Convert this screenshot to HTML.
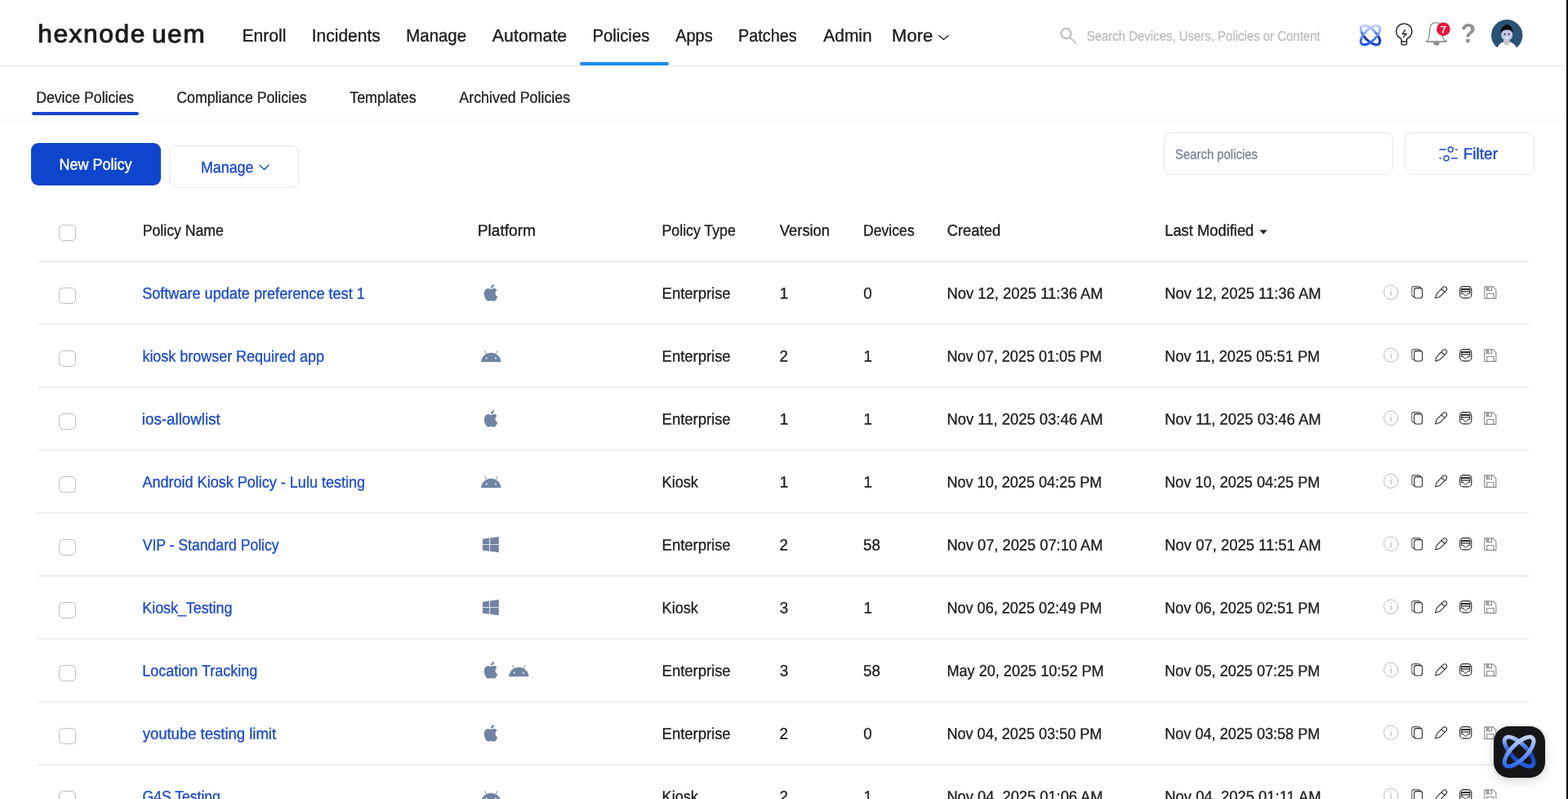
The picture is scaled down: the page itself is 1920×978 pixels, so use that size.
<!DOCTYPE html>
<html lang="en">
<head>
<meta charset="utf-8">
<title>Hexnode UEM - Device Policies</title>
<style>
*{box-sizing:border-box;margin:0;padding:0}
html,body{width:1920px;height:978px;overflow:hidden;background:#fff}
body{font-family:"Liberation Sans",sans-serif;color:#222}
#app{position:relative;width:1920px;height:978px;overflow:hidden;background:#fff;will-change:transform}
header,nav,main,section,.search,.tools,.tbl{display:contents}
a{text-decoration:none}
i,b{font-style:normal}
i,svg,button,.row,.chat,.btn-o{position:absolute;display:block}
button{appearance:none;border:0;background:none;font:inherit;overflow:visible;text-align:left}
.defs{left:0;top:0}
.t{position:absolute;left:0;top:0;white-space:pre;line-height:1;font-weight:400;transform-origin:0 0;text-rendering:geometricPrecision;font-family:"Liberation Sans",sans-serif}
.ic{overflow:visible}
.row{left:0;width:1918px;height:77px}
.hl{left:46px;top:76px;width:1826px;height:2px;background:#ededed}
.cb{left:72px;width:21px;height:20px;border:1px solid #bdbdbd;border-radius:5.5px;background:#fff}
.hdr-line{left:0;top:80px;width:1918px;height:1px;background:#e6e6e6}
.nav-ul{left:710px;top:76px;width:109.4px;height:4px;border-radius:2px;background:#1a8cf2}
.tab-ul{left:39.3px;top:137px;width:130.6px;height:4px;border-radius:2px;background:#1246cb}
.tab-band{left:0;top:144px;width:1918px;height:6px;background:linear-gradient(#fcfcfc,#fcfcfc 55%,#fafafa 65%,#fafafa 88%,#fff)}
.btn-new{left:38px;top:175px;width:159px;height:52px;border-radius:9px;background:#0f45cd}
.btn-o{border:1px solid #e8e8e8;border-radius:9px;background:#fff}
.btn-manage{left:207px;top:178px;width:159px;height:52px}
.inp-search{left:1425px;top:162px;width:281px;height:52px}
.btn-filter{left:1720px;top:162px;width:159px;height:52px}
.edge{left:1918px;top:0;width:2px;height:978px;background:#000}
.chat{left:1829px;top:889px;width:63px;height:63px;border-radius:19px;background:#161618;box-shadow:0 4px 14px rgba(0,0,0,.15),0 0 4px rgba(0,0,0,.08)}
</style>
</head>
<body>
<div id="app">
<svg class="defs" width="0" height="0" aria-hidden="true">
<defs>
<linearGradient id="g-a1" gradientUnits="userSpaceOnUse" x1="0" y1="-13" x2="0" y2="13" gradientTransform="rotate(45)"><stop offset="0" stop-color="#cdd9fc"/><stop offset=".38" stop-color="#8aa9f5"/><stop offset=".62" stop-color="#4a7eef"/><stop offset="1" stop-color="#1756ec"/></linearGradient>
<linearGradient id="g-a2" gradientUnits="userSpaceOnUse" x1="0" y1="-13" x2="0" y2="13" gradientTransform="rotate(-45)"><stop offset="0" stop-color="#c9d6fb"/><stop offset=".3" stop-color="#8eabf3"/><stop offset=".46" stop-color="#2f55c4"/><stop offset=".56" stop-color="#0d2f9c"/><stop offset=".75" stop-color="#0f3bb8"/><stop offset="1" stop-color="#1a55e2"/></linearGradient>
<linearGradient id="g-b1" gradientUnits="userSpaceOnUse" x1="0" y1="-13" x2="0" y2="13" gradientTransform="rotate(45)"><stop offset="0" stop-color="#c9d8ff"/><stop offset=".45" stop-color="#7ea4fb"/><stop offset="1" stop-color="#2463f4"/></linearGradient>
<linearGradient id="g-b2" gradientUnits="userSpaceOnUse" x1="0" y1="-13" x2="0" y2="13" gradientTransform="rotate(-45)"><stop offset="0" stop-color="#bfd0ff"/><stop offset=".35" stop-color="#4a78e8"/><stop offset=".55" stop-color="#153fae"/><stop offset="1" stop-color="#2562f2"/></linearGradient>
<symbol id="i-apple" viewBox="0 0 24 24" preserveAspectRatio="none"><path fill="#7083a3" d="M12.152 6.896c-.948 0-2.415-1.078-3.96-1.04-2.04.027-3.91 1.183-4.961 3.014-2.117 3.675-.546 9.103 1.519 12.09 1.013 1.454 2.208 3.09 3.792 3.039 1.52-.065 2.09-.987 3.935-.987 1.831 0 2.35.987 3.96.948 1.637-.026 2.676-1.48 3.676-2.948 1.156-1.688 1.636-3.325 1.662-3.415-.039-.013-3.182-1.221-3.22-4.857-.026-3.04 2.48-4.494 2.597-4.559-1.429-2.09-3.623-2.324-4.39-2.376-2-.156-3.675 1.09-4.61 1.09zM15.53 3.83c.843-1.012 1.4-2.427 1.245-3.83-1.207.052-2.662.805-3.532 1.818-.78.896-1.454 2.338-1.273 3.714 1.338.104 2.715-.688 3.559-1.701"/></symbol>
<symbol id="i-android" viewBox="0 5.2 24 13.6" preserveAspectRatio="none"><path fill="#7083a3" d="M17.523 15.3414c-.5511 0-.9993-.4486-.9993-.9997s.4483-.9993.9993-.9993c.5511 0 .9993.4483.9993.9993.0001.5511-.4482.9997-.9993.9997m-11.046 0c-.5511 0-.9993-.4486-.9993-.9997s.4482-.9993.9993-.9993c.5511 0 .9993.4483.9993.9993 0 .5511-.4483.9997-.9993.9997m11.4045-6.02l1.9973-3.4592a.416.416 0 00-.1521-.5676.416.416 0 00-.5676.1521l-2.0223 3.503C15.5902 8.2439 13.8533 7.8508 12 7.8508s-3.5902.3931-5.1367 1.0989L4.841 5.4467a.4161.4161 0 00-.5677-.1521.4157.4157 0 00-.1521.5676l1.9973 3.4592C2.6889 11.1867.3432 14.6589 0 18.761h24c-.3435-4.1021-2.6892-7.5743-6.1185-9.4396"/></symbol>
<symbol id="i-win" viewBox="0 32 448 448" preserveAspectRatio="none"><path fill="#7083a3" d="M0 93.7l183.6-25.3v177.4H0V93.7zm0 324.6l183.6 25.3V268.4H0v149.9zm203.8 28L448 480V268.4H203.8v177.9zm0-380.6v180.1H448V32L203.8 65.7z"/></symbol>
<symbol id="i-actions" viewBox="0 0 144 24">
<g fill="none" stroke-linecap="round" stroke-linejoin="round">
<circle cx="11.25" cy="11.7" r="8.7" stroke="#bdbdbd" stroke-width="1"/>
<path d="M11.25 10.4v5.2" stroke="#b0b0b0" stroke-width="1.05"/>
<circle cx="11.25" cy="7.7" r=".7" fill="#b0b0b0" stroke="none"/>
<g stroke="#2a2a2a" stroke-width="1.05">
<path d="M39.7 17.6C37.8 17.3 36.8 16.4 36.8 14.6V7C36.8 5.4 37.7 4.6 39.3 4.6H44.6C46.2 4.6 47.2 5.2 47.8 6.6" stroke="#555"/>
<rect x="39.7" y="6.6" width="9.9" height="12.3" rx="2.3"/>
<g transform="translate(65.6 19) rotate(45)"><path d="M0 0C-1.1-1.7-2.75-4-2.75-5.6V-16A2.75 2.75 0 0 1 2.75-16V-5.6C2.75-4 1.1-1.7 0 0ZM-2.75-13.6Q0-12.5 2.75-13.6"/></g>
<rect x="95.7" y="4.6" width="14.1" height="14.3" rx="4.2" stroke-width="1.15"/>
<path d="M97.8 8H107.6" stroke-width="1.8"/><path d="M97.8 10.9H107.6" stroke-width="1.4"/>
<path d="M97.7 7.7V13.6h2.5c.5 1.6 1.4 2.5 2.45 2.5s1.95-.9 2.45-2.5h2.6V7.7" stroke-width="1"/>
</g>
<g stroke="#8c8c8c" stroke-width="1.15">
<path d="M125.75 4.85h10.4l3.7 3.7v10.8h-14.1z"/>
<path d="M128.3 5v4.7h6.2V5M128.7 19.2v-5.7h8.4v5.7"/>
<path d="M128.9 5.3h2.6v4h-2.6z" fill="#9c9c9c" stroke="none"/>
</g>
</g>
</symbol>
<symbol id="i-atom" viewBox="-14 -14 28 28"><g fill="none" stroke-width="3"><ellipse rx="15" ry="7" transform="rotate(45)" stroke="url(#g-a2)"/><ellipse rx="15" ry="7" transform="rotate(-45)" stroke="url(#g-a1)"/></g></symbol>
<symbol id="i-atom2" viewBox="-14 -14 28 28"><g fill="none" stroke-width="3.3"><ellipse rx="15.6" ry="6.3" transform="rotate(45)" stroke="url(#g-b2)"/><ellipse rx="15.6" ry="6.3" transform="rotate(-45)" stroke="url(#g-b1)"/></g></symbol>
</defs>
</svg>
<header>
<a class="t logo" style="transform:matrix(1.04,.0005,0,1,46.2,26.81);font-size:30.5px;color:#1c1c1c;letter-spacing:1.503px;word-spacing:-3.2px;-webkit-text-stroke:0.95px;">hexnode uem</a>
<nav>
<a class="t" style="transform:matrix(0.9789,.0005,0,1,296.43,32.75);font-size:21.6px;color:#1a1a1a;-webkit-text-stroke:0.33px;">Enroll</a>
<a class="t" style="transform:matrix(0.973,.0005,0,1,381.72,32.75);font-size:21.6px;color:#1a1a1a;-webkit-text-stroke:0.33px;">Incidents</a>
<a class="t" style="transform:matrix(0.9452,.0005,0,1,497.28,32.75);font-size:21.6px;color:#1a1a1a;-webkit-text-stroke:0.33px;">Manage</a>
<a class="t" style="transform:matrix(0.9886,.0005,0,1,602.86,32.75);font-size:21.6px;color:#1a1a1a;-webkit-text-stroke:0.33px;">Automate</a>
<a class="t on" style="transform:matrix(0.9399,.0005,0,1,725.38,32.75);font-size:21.6px;color:#1a1a1a;-webkit-text-stroke:0.33px;">Policies</a>
<a class="t" style="transform:matrix(0.9257,.0005,0,1,827.17,32.75);font-size:21.6px;color:#1a1a1a;-webkit-text-stroke:0.33px;">Apps</a>
<a class="t" style="transform:matrix(0.9173,.0005,0,1,904.12,32.75);font-size:21.6px;color:#1a1a1a;-webkit-text-stroke:0.33px;">Patches</a>
<a class="t" style="transform:matrix(0.9687,.0005,0,1,1008.36,32.75);font-size:21.6px;color:#1a1a1a;-webkit-text-stroke:0.33px;">Admin</a>
<a class="t" style="transform:matrix(1.0253,.0005,0,1,1091.96,32.75);font-size:21.6px;color:#1a1a1a;-webkit-text-stroke:0.33px;">More</a>
<svg class="ic" style="left:1149.3px;top:42px" width="14" height="8" viewBox="0 0 14 8"><path d="M.7 1.4l5.8 4.9 5.8-4.9" fill="none" stroke="#1e1e1e" stroke-width="1.3" stroke-linecap="round" stroke-linejoin="round"/></svg>
<i class="nav-ul"></i>
</nav>
<label class="search"><svg class="ic" style="left:1297px;top:33px" width="24" height="24" viewBox="0 0 24 24"><g fill="none" stroke="#bfbfbf" stroke-linecap="round"><circle cx="8.4" cy="8" r="6.05" stroke-width="2.3"/><path d="M13 12.6l7.3 7" stroke-width="1.8"/></g></svg><span class="t" style="transform:matrix(0.8911,.0005,0,1,1330.7,36.64);font-size:16.8px;color:#bcbcbc;-webkit-text-stroke:0.28px;">Search Devices, Users, Policies or Content</span></label>
<div class="tools">
<svg class="ic" style="left:1663.85px;top:28.8px" width="28" height="28" viewBox="-14 -14 28 28"><use href="#i-atom" x="-14" y="-14" width="28" height="28"/></svg>
<svg class="ic" style="left:1706px;top:26px" width="28" height="32" viewBox="0 0 28 32"><g fill="none" stroke="#111" stroke-width="1.35" stroke-linecap="round" stroke-linejoin="round"><path d="M10.1 27.2V22.8C10.1 21.4 8.4 20.6 6.35 19.16A9.65 9.65 0 1 1 20.25 19.16C18.2 20.6 16.5 21.4 16.5 22.8V27.2C16.5 28.3 15.9 28.8 14.9 28.8H11.7C10.7 28.8 10.1 28.3 10.1 27.2ZM10.3 24.8H16.3"/><path d="M14.4 10.9l-3.1 4.7 5-.3-3.9 4.4" stroke-width="1.25"/></g></svg>
<svg class="ic" style="left:1744px;top:25px" width="32" height="33" viewBox="0 0 32 33"><g fill="none" stroke="#8c8c8c" stroke-linecap="round" stroke-linejoin="round"><path d="M3.2 25.2C4.9 24 5.7 22.7 5.9 20.5L6.7 11C7.1 5.7 10 2.6 14.3 2.6C18.6 2.6 21.5 5.7 21.9 11L22.7 20.5C22.9 22.7 23.7 24 27 25.2" stroke-width="1.3"/><path d="M3 25.9H26.7" stroke-width="1.9"/></g><path d="M11.1 26.8h7.6a3.8 4 0 0 1-7.6 0z" fill="#8c8c8c"/><circle cx="23.4" cy="10.7" r="8.3" fill="#e5143a"/></svg>
<b class="t badge" style="transform:matrix(1.069,.0005,0,1,1763.74,30.55);font-size:12.2px;color:#ffffff;-webkit-text-stroke:0.35px;">7</b>
<a class="t help" style="transform:matrix(0.9185,.0005,0,1,1788.87,23.9);font-size:33px;color:#8e8e8e;font-weight:700;">?</a>
<svg class="ic" style="left:1825.9px;top:23.7px" width="38.4" height="40" viewBox="0 0 38.4 40"><circle cx="19.2" cy="19.2" r="19.2" fill="#2a5277"/><path d="M4 38C5 36 6.4 35 7.7 34C9.3 30.6 11.8 28.3 15 27.3H23C26.2 28.3 29.1 30.6 30.7 34C32 35 33.4 36 34.4 38V40H4Z" fill="#fff"/><path d="M15.1 25h7.7v3.3c-.8 2.3-2.2 3.5-3.85 3.5s-3.05-1.2-3.85-3.5z" fill="#c4c9c5"/><ellipse cx="19.2" cy="18.7" rx="7" ry="7.3" fill="#c5c9e6"/><path d="M12.1 16.5c-.7-4.6.900-8 4.5-9.3 1.2-1.9 3.9-2 4.9-.3 3.4 1 5.4 4.6 4.7 9.4-1.1-2.6-3.2-3.7-7-3.7s-6 1.2-7.1 3.9z" fill="#08080a"/><circle cx="16.5" cy="17.7" r="1" fill="#111"/><circle cx="21.6" cy="17.7" r="1" fill="#111"/><path d="M16.6 21.3c1.5 1 3.3 1 4.8 0-.3 2.4-4.5 2.4-4.8 0z" fill="#fff"/></svg>
</div>
<i class="hdr-line"></i>
</header>
<nav class="tabs">
<a class="t" style="transform:matrix(0.9098,.0005,0,1,44.24,110.75);font-size:19.4px;color:#1c1c1c;-webkit-text-stroke:0.3px;">Device Policies</a>
<a class="t" style="transform:matrix(0.9128,.0005,0,1,216.31,110.75);font-size:19.4px;color:#1c1c1c;-webkit-text-stroke:0.3px;">Compliance Policies</a>
<a class="t" style="transform:matrix(0.9217,.0005,0,1,428.21,110.75);font-size:19.4px;color:#1c1c1c;-webkit-text-stroke:0.3px;">Templates</a>
<a class="t" style="transform:matrix(0.9195,.0005,0,1,562.37,110.75);font-size:19.4px;color:#1c1c1c;-webkit-text-stroke:0.3px;">Archived Policies</a>
<i class="tab-ul"></i><i class="tab-band"></i>
</nav>
<main>
<section class="toolbar">
<button class="btn-new" type="button"><span class="t" style="transform:matrix(0.9267,.0005,0,1,34.56,17.65);font-size:19.4px;color:#ffffff;-webkit-text-stroke:0.4px;">New Policy</span></button>
<button class="btn-o btn-manage" type="button"><span class="t" style="transform:matrix(0.92,.0005,0,1,37.97,17.25);font-size:19.4px;color:#1a49c6;-webkit-text-stroke:0.3px;">Manage</span><svg class="ic" style="left:109px;top:21.8px" width="13" height="8" viewBox="0 0 13 8"><path d="M1 1.2l5.5 5.3 5.5-5.3" fill="none" stroke="#1d4fcb" stroke-width="1.4" stroke-linecap="round" stroke-linejoin="round"/></svg></button>
<label class="btn-o inp-search"><span class="t" style="transform:matrix(0.8859,.0005,0,1,13.1,18.44);font-size:16.8px;color:#748292;-webkit-text-stroke:0.28px;">Search policies</span></label>
<button class="btn-o btn-filter" type="button"><svg class="ic" style="left:39.5px;top:14.5px" width="25" height="21" viewBox="0 0 25 21"><g fill="none" stroke="#1f4fca" stroke-width="1.5" stroke-linecap="round"><path d="M2 5H9.1M21.7 5H23.3M2 15.75H3.3M16.5 15.75H23.3"/><circle cx="15.25" cy="5" r="3.05" stroke-width="1.4"/><circle cx="10" cy="15.75" r="3.05" stroke-width="1.4"/></g></svg><span class="t" style="transform:matrix(0.9822,.0005,0,1,70.69,16.75);font-size:19.4px;color:#1a49c6;-webkit-text-stroke:0.4px;">Filter</span></button>
</section>
<div class="tbl" role="table">
<div class="row" role="row" style="top:243px">
<i class="cb" style="top:32px"></i>
<span class="t th" role="columnheader" style="transform:matrix(0.9107,.0005,0,1,174.75,30.55);font-size:19.4px;color:#1a1a1a;-webkit-text-stroke:0.33px;">Policy Name</span>
<span class="t th" role="columnheader" style="transform:matrix(0.9864,.0005,0,1,584.75,30.55);font-size:19.4px;color:#1a1a1a;-webkit-text-stroke:0.33px;">Platform</span>
<span class="t th" role="columnheader" style="transform:matrix(0.9128,.0005,0,1,810.55,30.55);font-size:19.4px;color:#1a1a1a;-webkit-text-stroke:0.33px;">Policy Type</span>
<span class="t th" role="columnheader" style="transform:matrix(0.9454,.0005,0,1,954.86,30.55);font-size:19.4px;color:#1a1a1a;-webkit-text-stroke:0.33px;">Version</span>
<span class="t th" role="columnheader" style="transform:matrix(0.9082,.0005,0,1,1057.05,30.55);font-size:19.4px;color:#1a1a1a;-webkit-text-stroke:0.33px;">Devices</span>
<span class="t th" role="columnheader" style="transform:matrix(0.9492,.0005,0,1,1159.69,30.55);font-size:19.4px;color:#1a1a1a;-webkit-text-stroke:0.33px;">Created</span>
<span class="t th" role="columnheader" style="transform:matrix(0.9461,.0005,0,1,1426.2,30.55);font-size:19.4px;color:#1a1a1a;-webkit-text-stroke:0.33px;">Last Modified</span>
<svg class="ic" style="left:1542px;top:38px" width="10" height="6" viewBox="0 0 10 6"><path d="M.3.4h9.4L5 5.7z" fill="#222"/></svg>
<i class="hl"></i>
</div>
<div class="row" role="row" style="top:320px">
<i class="cb" style="top:32px"></i>
<a class="t lnk" role="cell" style="transform:matrix(0.9332,.0005,0,1,174.14,30.55);font-size:19.4px;color:#1a49c6;-webkit-text-stroke:0.3px;">Software update preference test 1</a>
<svg class="ic" style="left:590.9px;top:27.9px" width="20.1" height="20.8"><use href="#i-apple"/></svg>
<span class="t" role="cell" style="transform:matrix(0.9507,.0005,0,1,810.58,30.55);font-size:19.4px;color:#1c1c1c;-webkit-text-stroke:0.3px;">Enterprise</span>
<span class="t" role="cell" style="transform:matrix(0.97,.0005,0,1,954.73,30.55);font-size:19.4px;color:#1c1c1c;-webkit-text-stroke:0.3px;">1</span>
<span class="t" role="cell" style="transform:matrix(0.97,.0005,0,1,1057.16,30.55);font-size:19.4px;color:#1c1c1c;-webkit-text-stroke:0.3px;">0</span>
<span class="t" role="cell" style="transform:matrix(0.9504,.0005,0,1,1159.38,30.55);font-size:19.4px;color:#1c1c1c;-webkit-text-stroke:0.3px;">Nov 12, 2025 11:36 AM</span>
<span class="t" role="cell" style="transform:matrix(0.9504,.0005,0,1,1426.28,30.55);font-size:19.4px;color:#1c1c1c;-webkit-text-stroke:0.3px;">Nov 12, 2025 11:36 AM</span>
<svg class="ic" style="left:1692px;top:26px" width="144" height="24"><use href="#i-actions"/></svg>
<i class="hl"></i>
</div>
<div class="row" role="row" style="top:397px">
<i class="cb" style="top:32px"></i>
<a class="t lnk" role="cell" style="transform:matrix(0.9258,.0005,0,1,174.4,30.55);font-size:19.4px;color:#1a49c6;-webkit-text-stroke:0.3px;">kiosk browser Required app</a>
<svg class="ic" style="left:588.65px;top:31.8px" width="24.65" height="14.2"><use href="#i-android"/></svg>
<span class="t" role="cell" style="transform:matrix(0.9507,.0005,0,1,810.58,30.55);font-size:19.4px;color:#1c1c1c;-webkit-text-stroke:0.3px;">Enterprise</span>
<span class="t" role="cell" style="transform:matrix(0.97,.0005,0,1,954.62,30.55);font-size:19.4px;color:#1c1c1c;-webkit-text-stroke:0.3px;">2</span>
<span class="t" role="cell" style="transform:matrix(0.97,.0005,0,1,1057.43,30.55);font-size:19.4px;color:#1c1c1c;-webkit-text-stroke:0.3px;">1</span>
<span class="t" role="cell" style="transform:matrix(0.9324,.0005,0,1,1159.41,30.55);font-size:19.4px;color:#1c1c1c;-webkit-text-stroke:0.3px;">Nov 07, 2025 01:05 PM</span>
<span class="t" role="cell" style="transform:matrix(0.9389,.0005,0,1,1426.3,30.55);font-size:19.4px;color:#1c1c1c;-webkit-text-stroke:0.3px;">Nov 11, 2025 05:51 PM</span>
<svg class="ic" style="left:1692px;top:26px" width="144" height="24"><use href="#i-actions"/></svg>
<i class="hl"></i>
</div>
<div class="row" role="row" style="top:474px">
<i class="cb" style="top:32px"></i>
<a class="t lnk" role="cell" style="transform:matrix(0.9677,.0005,0,1,173.86,30.55);font-size:19.4px;color:#1a49c6;-webkit-text-stroke:0.3px;">ios-allowlist</a>
<svg class="ic" style="left:590.9px;top:27.9px" width="20.1" height="20.8"><use href="#i-apple"/></svg>
<span class="t" role="cell" style="transform:matrix(0.9507,.0005,0,1,810.58,30.55);font-size:19.4px;color:#1c1c1c;-webkit-text-stroke:0.3px;">Enterprise</span>
<span class="t" role="cell" style="transform:matrix(0.97,.0005,0,1,954.73,30.55);font-size:19.4px;color:#1c1c1c;-webkit-text-stroke:0.3px;">1</span>
<span class="t" role="cell" style="transform:matrix(0.97,.0005,0,1,1057.43,30.55);font-size:19.4px;color:#1c1c1c;-webkit-text-stroke:0.3px;">1</span>
<span class="t" role="cell" style="transform:matrix(0.9504,.0005,0,1,1159.38,30.55);font-size:19.4px;color:#1c1c1c;-webkit-text-stroke:0.3px;">Nov 11, 2025 03:46 AM</span>
<span class="t" role="cell" style="transform:matrix(0.9504,.0005,0,1,1426.28,30.55);font-size:19.4px;color:#1c1c1c;-webkit-text-stroke:0.3px;">Nov 11, 2025 03:46 AM</span>
<svg class="ic" style="left:1692px;top:26px" width="144" height="24"><use href="#i-actions"/></svg>
<i class="hl"></i>
</div>
<div class="row" role="row" style="top:551px">
<i class="cb" style="top:32px"></i>
<a class="t lnk" role="cell" style="transform:matrix(0.9298,.0005,0,1,174.47,30.55);font-size:19.4px;color:#1a49c6;-webkit-text-stroke:0.3px;">Android Kiosk Policy - Lulu testing</a>
<svg class="ic" style="left:588.65px;top:31.8px" width="24.65" height="14.2"><use href="#i-android"/></svg>
<span class="t" role="cell" style="transform:matrix(0.934,.0005,0,1,810.6,30.55);font-size:19.4px;color:#1c1c1c;-webkit-text-stroke:0.3px;">Kiosk</span>
<span class="t" role="cell" style="transform:matrix(0.97,.0005,0,1,954.73,30.55);font-size:19.4px;color:#1c1c1c;-webkit-text-stroke:0.3px;">1</span>
<span class="t" role="cell" style="transform:matrix(0.97,.0005,0,1,1057.43,30.55);font-size:19.4px;color:#1c1c1c;-webkit-text-stroke:0.3px;">1</span>
<span class="t" role="cell" style="transform:matrix(0.9324,.0005,0,1,1159.41,30.55);font-size:19.4px;color:#1c1c1c;-webkit-text-stroke:0.3px;">Nov 10, 2025 04:25 PM</span>
<span class="t" role="cell" style="transform:matrix(0.9324,.0005,0,1,1426.31,30.55);font-size:19.4px;color:#1c1c1c;-webkit-text-stroke:0.3px;">Nov 10, 2025 04:25 PM</span>
<svg class="ic" style="left:1692px;top:26px" width="144" height="24"><use href="#i-actions"/></svg>
<i class="hl"></i>
</div>
<div class="row" role="row" style="top:628px">
<i class="cb" style="top:32px"></i>
<a class="t lnk" role="cell" style="transform:matrix(0.9076,.0005,0,1,174.66,30.55);font-size:19.4px;color:#1a49c6;-webkit-text-stroke:0.3px;">VIP - Standard Policy</a>
<svg class="ic" style="left:591px;top:29px" width="19.9" height="19.2"><use href="#i-win"/></svg>
<span class="t" role="cell" style="transform:matrix(0.9507,.0005,0,1,810.58,30.55);font-size:19.4px;color:#1c1c1c;-webkit-text-stroke:0.3px;">Enterprise</span>
<span class="t" role="cell" style="transform:matrix(0.97,.0005,0,1,954.62,30.55);font-size:19.4px;color:#1c1c1c;-webkit-text-stroke:0.3px;">2</span>
<span class="t" role="cell" style="transform:matrix(0.97,.0005,0,1,1056.95,30.55);font-size:19.4px;color:#1c1c1c;-webkit-text-stroke:0.3px;">58</span>
<span class="t" role="cell" style="transform:matrix(0.9431,.0005,0,1,1159.39,30.55);font-size:19.4px;color:#1c1c1c;-webkit-text-stroke:0.3px;">Nov 07, 2025 07:10 AM</span>
<span class="t" role="cell" style="transform:matrix(0.9504,.0005,0,1,1426.28,30.55);font-size:19.4px;color:#1c1c1c;-webkit-text-stroke:0.3px;">Nov 07, 2025 11:51 AM</span>
<svg class="ic" style="left:1692px;top:26px" width="144" height="24"><use href="#i-actions"/></svg>
<i class="hl"></i>
</div>
<div class="row" role="row" style="top:705px">
<i class="cb" style="top:32px"></i>
<a class="t lnk" role="cell" style="transform:matrix(0.9199,.0005,0,1,174.32,30.55);font-size:19.4px;color:#1a49c6;-webkit-text-stroke:0.3px;">Kiosk_Testing</a>
<svg class="ic" style="left:591px;top:29px" width="19.9" height="19.2"><use href="#i-win"/></svg>
<span class="t" role="cell" style="transform:matrix(0.934,.0005,0,1,810.6,30.55);font-size:19.4px;color:#1c1c1c;-webkit-text-stroke:0.3px;">Kiosk</span>
<span class="t" role="cell" style="transform:matrix(0.97,.0005,0,1,954.68,30.55);font-size:19.4px;color:#1c1c1c;-webkit-text-stroke:0.3px;">3</span>
<span class="t" role="cell" style="transform:matrix(0.97,.0005,0,1,1057.43,30.55);font-size:19.4px;color:#1c1c1c;-webkit-text-stroke:0.3px;">1</span>
<span class="t" role="cell" style="transform:matrix(0.9324,.0005,0,1,1159.41,30.55);font-size:19.4px;color:#1c1c1c;-webkit-text-stroke:0.3px;">Nov 06, 2025 02:49 PM</span>
<span class="t" role="cell" style="transform:matrix(0.9324,.0005,0,1,1426.31,30.55);font-size:19.4px;color:#1c1c1c;-webkit-text-stroke:0.3px;">Nov 06, 2025 02:51 PM</span>
<svg class="ic" style="left:1692px;top:26px" width="144" height="24"><use href="#i-actions"/></svg>
<i class="hl"></i>
</div>
<div class="row" role="row" style="top:782px">
<i class="cb" style="top:32px"></i>
<a class="t lnk" role="cell" style="transform:matrix(0.9276,.0005,0,1,174.31,30.55);font-size:19.4px;color:#1a49c6;-webkit-text-stroke:0.3px;">Location Tracking</a>
<svg class="ic" style="left:590.9px;top:27.9px" width="20.1" height="20.8"><use href="#i-apple"/></svg>
<svg class="ic" style="left:623.35px;top:31.8px" width="24.65" height="14.2"><use href="#i-android"/></svg>
<span class="t" role="cell" style="transform:matrix(0.9507,.0005,0,1,810.58,30.55);font-size:19.4px;color:#1c1c1c;-webkit-text-stroke:0.3px;">Enterprise</span>
<span class="t" role="cell" style="transform:matrix(0.97,.0005,0,1,954.68,30.55);font-size:19.4px;color:#1c1c1c;-webkit-text-stroke:0.3px;">3</span>
<span class="t" role="cell" style="transform:matrix(0.97,.0005,0,1,1056.95,30.55);font-size:19.4px;color:#1c1c1c;-webkit-text-stroke:0.3px;">58</span>
<span class="t" role="cell" style="transform:matrix(0.9338,.0005,0,1,1159.4,30.55);font-size:19.4px;color:#1c1c1c;-webkit-text-stroke:0.3px;">May 20, 2025 10:52 PM</span>
<span class="t" role="cell" style="transform:matrix(0.9324,.0005,0,1,1426.31,30.55);font-size:19.4px;color:#1c1c1c;-webkit-text-stroke:0.3px;">Nov 05, 2025 07:25 PM</span>
<svg class="ic" style="left:1692px;top:26px" width="144" height="24"><use href="#i-actions"/></svg>
<i class="hl"></i>
</div>
<div class="row" role="row" style="top:859px">
<i class="cb" style="top:32px"></i>
<a class="t lnk" role="cell" style="transform:matrix(0.9539,.0005,0,1,174.64,30.55);font-size:19.4px;color:#1a49c6;-webkit-text-stroke:0.3px;">youtube testing limit</a>
<svg class="ic" style="left:590.9px;top:27.9px" width="20.1" height="20.8"><use href="#i-apple"/></svg>
<span class="t" role="cell" style="transform:matrix(0.9507,.0005,0,1,810.58,30.55);font-size:19.4px;color:#1c1c1c;-webkit-text-stroke:0.3px;">Enterprise</span>
<span class="t" role="cell" style="transform:matrix(0.97,.0005,0,1,954.62,30.55);font-size:19.4px;color:#1c1c1c;-webkit-text-stroke:0.3px;">2</span>
<span class="t" role="cell" style="transform:matrix(0.97,.0005,0,1,1057.16,30.55);font-size:19.4px;color:#1c1c1c;-webkit-text-stroke:0.3px;">0</span>
<span class="t" role="cell" style="transform:matrix(0.9324,.0005,0,1,1159.41,30.55);font-size:19.4px;color:#1c1c1c;-webkit-text-stroke:0.3px;">Nov 04, 2025 03:50 PM</span>
<span class="t" role="cell" style="transform:matrix(0.9324,.0005,0,1,1426.31,30.55);font-size:19.4px;color:#1c1c1c;-webkit-text-stroke:0.3px;">Nov 04, 2025 03:58 PM</span>
<svg class="ic" style="left:1692px;top:26px" width="144" height="24"><use href="#i-actions"/></svg>
<i class="hl"></i>
</div>
<div class="row" role="row" style="top:936px">
<i class="cb" style="top:32px"></i>
<a class="t lnk" role="cell" style="transform:matrix(0.9053,.0005,0,1,174.53,30.55);font-size:19.4px;color:#1a49c6;-webkit-text-stroke:0.3px;">G4S Testing</a>
<svg class="ic" style="left:588.65px;top:31.8px" width="24.65" height="14.2"><use href="#i-android"/></svg>
<span class="t" role="cell" style="transform:matrix(0.934,.0005,0,1,810.6,30.55);font-size:19.4px;color:#1c1c1c;-webkit-text-stroke:0.3px;">Kiosk</span>
<span class="t" role="cell" style="transform:matrix(0.97,.0005,0,1,954.62,30.55);font-size:19.4px;color:#1c1c1c;-webkit-text-stroke:0.3px;">2</span>
<span class="t" role="cell" style="transform:matrix(0.97,.0005,0,1,1057.43,30.55);font-size:19.4px;color:#1c1c1c;-webkit-text-stroke:0.3px;">1</span>
<span class="t" role="cell" style="transform:matrix(0.9431,.0005,0,1,1159.39,30.55);font-size:19.4px;color:#1c1c1c;-webkit-text-stroke:0.3px;">Nov 04, 2025 01:06 AM</span>
<span class="t" role="cell" style="transform:matrix(0.9504,.0005,0,1,1426.28,30.55);font-size:19.4px;color:#1c1c1c;-webkit-text-stroke:0.3px;">Nov 04, 2025 01:11 AM</span>
<svg class="ic" style="left:1692px;top:26px" width="144" height="24"><use href="#i-actions"/></svg>
<i class="hl"></i>
</div>
</div>
</main>
<div class="chat"><svg class="ic" style="left:10.4px;top:10.4px" width="42.2" height="42.2" viewBox="-14 -14 28 28"><use href="#i-atom2" x="-14" y="-14" width="28" height="28"/></svg></div>
<i class="edge"></i>
</div>
</body>
</html>
